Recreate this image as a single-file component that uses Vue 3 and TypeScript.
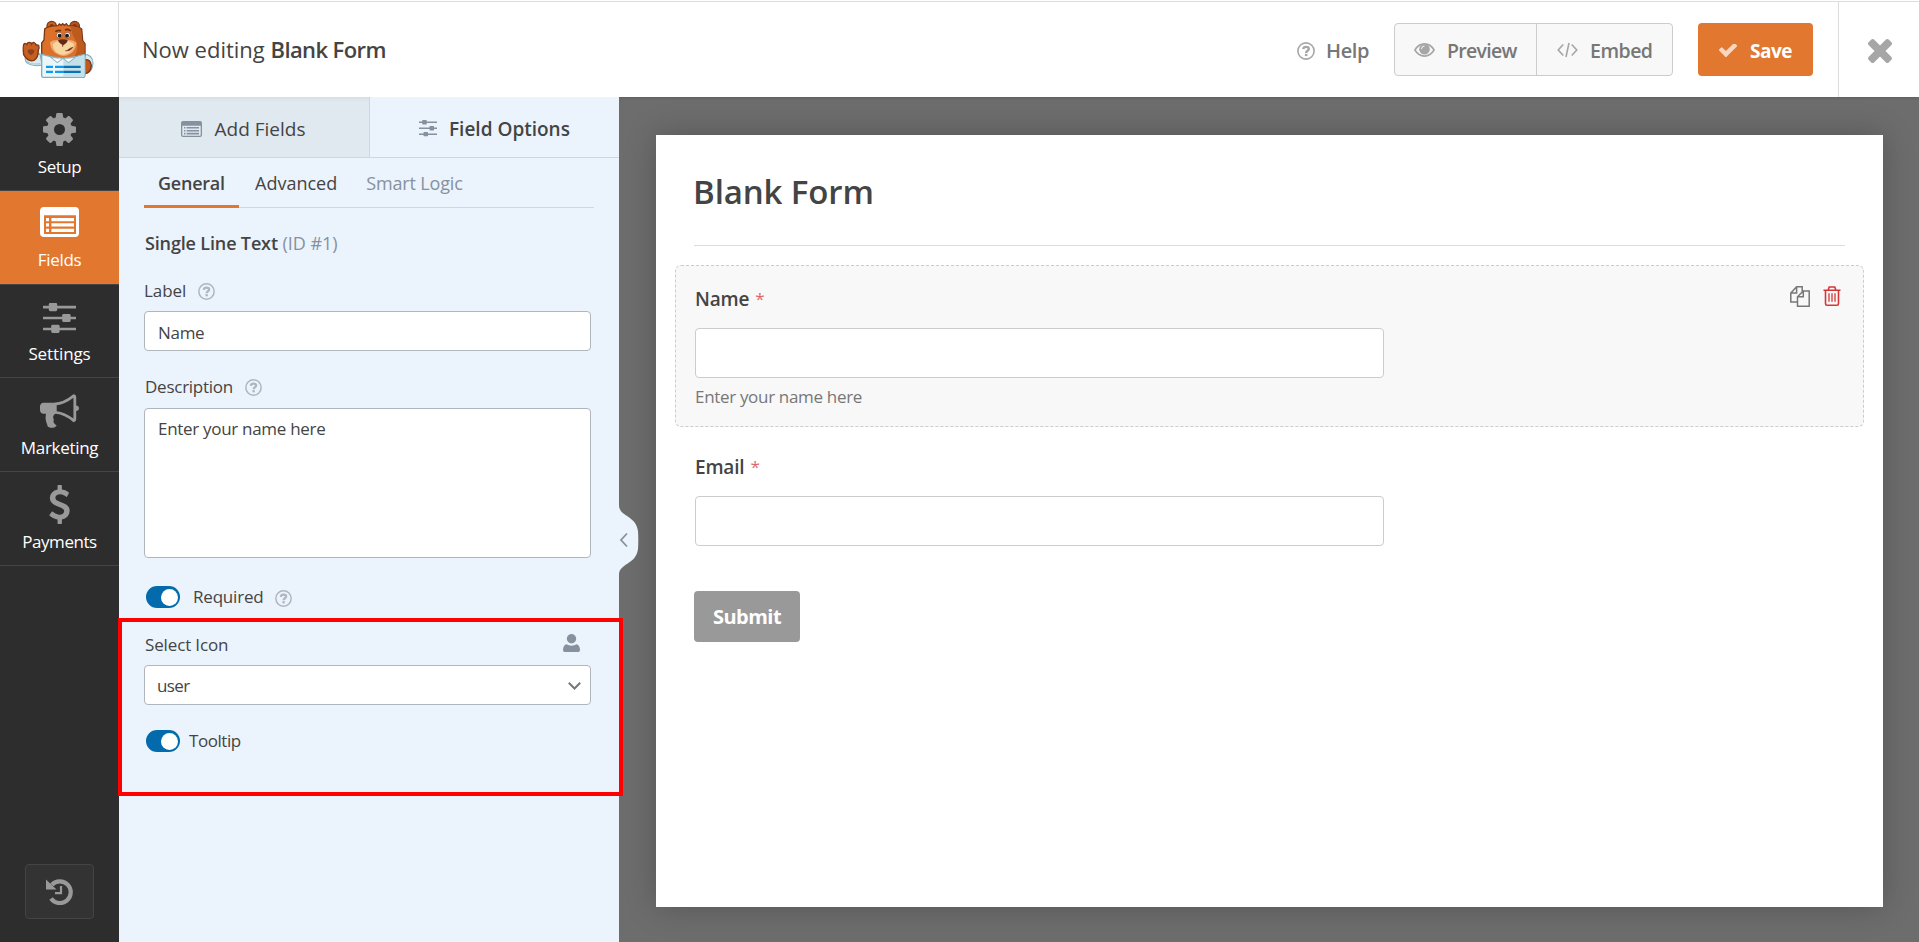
<script setup lang="ts">
import { ref } from 'vue'

interface NavItem {
  id: string
  label: string
  icon: string
  width: number
  height: number
}

const nav: NavItem[] = [
  { id: 'setup', label: 'Setup', icon: 'i-cog', width: 33, height: 33 },
  { id: 'fields', label: 'Fields', icon: 'i-list', width: 39, height: 30 },
  { id: 'settings', label: 'Settings', icon: 'i-sliders', width: 33, height: 30 },
  { id: 'marketing', label: 'Marketing', icon: 'i-bullhorn', width: 39, height: 34 },
  { id: 'payments', label: 'Payments', icon: 'i-dollar', width: 21, height: 39 },
]

const section = ref('fields')
const label = ref('Name')
const description = ref('Enter your name here')
const icon = ref('user')
const required = ref(true)
const tooltip = ref(true)
</script>

<template>
  <svg class="sprite" aria-hidden="true">
    <symbol id="i-cog" viewBox="128 128 1536 1536"><path fill="currentColor" d="M1152 896q0-106-75-181t-181-75-181 75-75 181 75 181 181 75 181-75 75-181zm512-109v222q0 12-8 23t-20 13l-185 28q-19 54-39 91 35 50 107 138 10 12 10 25t-9 23q-27 37-99 108t-94 71q-12 0-26-9l-138-108q-44 23-91 38-16 136-29 186-7 28-36 28h-222q-14 0-24.5-8.5t-11.5-21.5l-28-184q-49-16-90-37l-141 107q-10 9-25 9-14 0-25-11-126-114-165-168-7-10-7-23 0-12 8-23 15-21 51-66.5t54-70.5q-27-50-41-99l-183-27q-13-2-21-12.5t-8-23.5v-222q0-12 8-23t19-13l186-28q14-46 39-92-40-57-107-138-10-12-10-24 0-10 9-23 26-36 98.5-107.5t94.5-71.5q13 0 26 10l138 107q44-23 91-38 16-136 29-186 7-28 36-28h222q14 0 24.5 8.5t11.5 21.5l28 184q49 16 90 37l142-107q9-9 24-9 13 0 25 10 129 119 165 170 7 8 7 22 0 12-8 23-15 21-51 66.5t-54 70.5q26 50 41 98l183 28q13 2 21 12.5t8 23.5z" /></symbol>
    <symbol id="i-list" viewBox="0 0 39 30">
      <path fill="currentColor" fill-rule="evenodd" d="M4 0H35a4 4 0 0 1 4 4V26a4 4 0 0 1-4 4H4a4 4 0 0 1-4-4V4A4 4 0 0 1 4 0ZM4 8.3V27H36V8.3Z" />
      <path fill="currentColor" d="M6 11h3v3.2H6zM11.4 11H34v3.2H11.4zM6 16.3h3v3.2H6zM11.4 16.3H34v3.2H11.4zM6 21.8h3v3.2H6zM11.4 21.8H34v3.2H11.4z" />
    </symbol>
    <symbol id="i-sliders" viewBox="0 0 33 30">
      <path fill="currentColor" d="M0 2.8h33v2.6H0zM0 13.7h33v2.6H0zM0 24.7h33v2.6H0z" />
      <rect x="5.8" y="0" width="8.4" height="8.2" rx="1.4" fill="currentColor" />
      <rect x="19.2" y="10.9" width="8.4" height="8.2" rx="1.4" fill="currentColor" />
      <rect x="8.2" y="21.8" width="8.4" height="8.2" rx="1.4" fill="currentColor" />
    </symbol>
    <symbol id="i-bullhorn" viewBox="0 116 1792 1560"><path fill="currentColor" d="M1664 640q53 0 90.500 37.500t37.500 90.500-37.500 90.500-90.500 37.500v384q0 52-38 90t-90 38q-417-347-812-380-58 19-91 66t-31 100.500 40 92.500q-20 33-23 65.500t6 58 33.500 55 48 50 61.500 50.500q-29 58-111.500 83t-168.500 11.500-132-55.500q-7-23-29.500-87.500t-32-94.500-23-89-15-101 3.500-98.500 22-110.500h-122q-66 0-113-47t-47-113v-192q0-66 47-113t113-47h480q435 0 896-384 52 0 90 38t38 90v384zm-128 604v-954q-394 302-768 343v270q377 42 768 341z" /></symbol>
    <symbol id="i-dollar" viewBox="424 0 940 1792"><path fill="currentColor" d="M1362 1185q0 153-99.500 263.500t-258.500 136.500v175q0 14-9 23t-23 9h-135q-13 0-22.500-9.500t-9.500-22.500v-175q-66-9-127.500-31t-101.500-44.500-74-48-46.500-37.500-17.500-18q-17-21-2-41l103-135q7-10 23-12 15-2 24 9l2 2q113 99 243 125 37 8 74 8 81 0 142.500-43t61.500-122q0-28-15-53t-33.500-42-58.500-37.500-66-32-80-32.500q-39-16-61.500-25t-61.500-26.500-62.500-31-56.500-35.500-53.500-42.500-43.500-49-35.500-58-21-66.500-8.500-78q0-138 98-242t255-134v-180q0-13 9.500-22.500t22.500-9.500h135q14 0 23 9t9 23v176q57 6 110.500 23t87 33.500 63.500 37.500 39 29 15 14q17 18 5 38l-81 146q-8 15-23 16-14 3-27-7-3-3-14.500-12t-39-26.500-58.500-32-74.500-26-85.500-11.500q-95 0-155 43t-60 111q0 26 8.500 48t29.500 41.500 39.500 33 56 31 60.500 27 70 27.500q53 20 81 31.500t76 35 75.500 42.500 62 50 53 63.500 31.500 76.500 13 94z" /></symbol>
    <symbol id="i-help" viewBox="0 0 18 18">
      <circle cx="9" cy="9" r="8.1" fill="none" stroke="currentColor" stroke-width="1.6" />
      <path d="M6.200 7.200C6.400 5.400 7.500 4.900 9 4.900c1.700 0 2.800.8 2.800 2.100 0 1.800-2.700 1.700-2.700 3.900" fill="none" stroke="currentColor" stroke-width="2.400" />
      <rect x="7.900" y="11.800" width="2.500" height="2.300" fill="currentColor" />
    </symbol>
  </svg>

  <div class="builder">
    <header class="topbar">
      <div class="topbar-inner">
        <div class="logo">
          <svg viewBox="60 55 230 185" width="76.7" height="61.7">
            <path d="M112 198C90 198 72 190 76 172l44-10 6 34z" fill="#d9ebf0" stroke="#7eaaba" stroke-width="3" />
            <path d="M80 184q12 12 40 8" fill="none" stroke="#9cc3cf" stroke-width="3" />
            <path d="M71 165q-4-32 3-34 5 0 7 5 1-9 8-8 5 0 6 5 4-7 9-3 4 2 4 6 8-2 9 5 1 5-2 10 0 24-13 31-18 6-31-17z" fill="#c65f22" stroke="#7c3714" stroke-width="4" />
            <path d="M83 152q9-6 20 0 0 10-10 15-10-5-10-15z" fill="#8e421c" />
            <path d="M250 164q28 0 29 27-2 27-24 32z" fill="#d9ebf0" stroke="#7eaaba" stroke-width="3" />
            <path d="M254 180q18-2 20 18-2 22-20 24z" fill="#c2581d" stroke="#7c3714" stroke-width="4" />
            <circle cx="155" cy="79" r="14" fill="#c7611f" stroke="#7c3714" stroke-width="4" />
            <circle cx="224" cy="79" r="14" fill="#b8531c" stroke="#7c3714" stroke-width="4" />
            <circle cx="155" cy="79" r="6" fill="#7c3714" />
            <circle cx="224" cy="79" r="6" fill="#7c3714" />
            <path d="M134 88q8-9 40-10l4-5 5 4 5-5 5 5 6-5 4 6q34 1 42 10l3 35 7 9v36q-14 8-34 8h-62q-20 0-34-8v-38l7-9z" fill="#dd7029" stroke="#7c3714" stroke-width="4" />
            <path d="M212 80q24 1 31 9l3 34 7 9v33q-13 8-32 9 14-20 10-45-17-24-19-49z" fill="#bd5a1d" />
            <path d="M150 128q10-8 23-7h33q14-1 23 8-2 34-38 40-38-4-41-41z" fill="#f0a875" />
            <path d="M158 134q14-12 30-12 20 0 34 12-4 29-34 31-27-2-30-31z" fill="#f8d79f" />
            <circle cx="178" cy="107" r="9" fill="#fff" stroke="#7c3714" stroke-width="2" />
            <circle cx="202" cy="107" r="9" fill="#fff" stroke="#7c3714" stroke-width="2" />
            <circle cx="179" cy="108" r="6" fill="#151b24" />
            <circle cx="201" cy="108" r="6" fill="#151b24" />
            <path d="M166 96q8-6 17-3M195 91q9-5 17 3" fill="none" stroke="#6f3011" stroke-width="5" />
            <path d="M174 122q14-7 29 0 0 8-14 15-14-7-15-15z" fill="#612b18" />
            <path d="M188 135v6M196 153q14 3 22-11" fill="none" stroke="#81392a" stroke-width="3" />
            <path d="M202 150l13-8q-2 14-13 8z" fill="#81392a" />
            <path d="M125 164q16 3 32 8 33 7 66 0 16-5 32-8v64q0 5-5 5H130q-5 0-5-5z" fill="#ecf6f8" stroke="#7daebe" stroke-width="4" />
            <path d="M190 177q18 0 33-3 16-4 30-8v61q0 4-4 4h-59z" fill="#c4e1e9" />
            <path d="M150 171l22 18 17-13 17 13 22-18q-38 9-78 0z" fill="#fff" stroke="#8db5c1" stroke-width="3" />
            <path d="M138 198h21v7h-21zM138 213h21v7h-21zM165 198h25v7h-25zM165 213h25v7h-25z" fill="#0c9bee" />
            <path d="M190 198h52v7h-52zM190 213h52v7h-52z" fill="#0872b5" />
          </svg>
        </div>
        <h1 class="editing">Now editing <b>Blank Form</b></h1>
        <a class="help"><svg width="18" height="18"><use href="#i-help" /></svg><span>Help</span></a>
        <div class="group">
          <button class="preview">
            <svg viewBox="0 0 21 14" width="21" height="14">
              <path d="M.9 7Q4.500.900 10.500.900T20.100 7Q16.500 13.100 10.500 13.100T.9 7Z" fill="none" stroke="currentColor" stroke-width="1.600" />
              <circle cx="10.500" cy="6.200" r="5.300" fill="currentColor" />
              <path d="M7.500 6q0-3 3-3" fill="none" stroke="#f8f8f8" stroke-width="1" />
            </svg>
            <span>Preview</span>
          </button>
          <button class="embed">
            <svg viewBox="0 0 21 16" width="21" height="16"><path d="M6.300 2.500 1.200 8l5.100 5.500M14.700 2.500 19.800 8l-5.100 5.500M12 1 9 15" fill="none" stroke="currentColor" stroke-width="1.600" /></svg>
            <span>Embed</span>
          </button>
        </div>
        <button class="save">
          <svg viewBox="121 410 1550 1112" width="18" height="13"><path fill="currentColor" d="M1671 566q0 40-28 68l-724 724-136 136q-28 28-68 28t-68-28l-136-136-362-362q-28-28-28-68t28-68l136-136q28-28 68-28t68 28l294 295 656-657q28-28 68-28t68 28l136 136q28 28 28 68z" /></svg>
          <span>Save</span>
        </button>
        <button class="close">
          <svg viewBox="302 366 1188 1188" width="24" height="24"><path fill="currentColor" d="M1490 1322q0 40-28 68l-136 136q-28 28-68 28t-68-28l-294-294-294 294q-28 28-68 28t-68-28l-136-136q-28-28-28-68t28-68l294-294-294-294q-28-28-28-68t28-68l136-136q28-28 68-28t68 28l294 294 294-294q28-28 68-28t68 28l136 136q28 28 28 68t-28 68l-294 294 294 294q28 28 28 68z" /></svg>
        </button>
      </div>
    </header>

    <div class="body">
      <nav class="sidebar">
        <a v-for="n in nav" :key="n.id" :class="['nav', n.id, { active: section === n.id }]" @click="section = n.id">
          <span class="nav-icon"><svg :width="n.width" :height="n.height"><use :href="'#' + n.icon" /></svg></span>
          <span class="nav-label">{{ n.label }}</span>
        </a>
        <button class="revisions">
          <svg viewBox="0 0 27 27" width="27" height="27">
            <path d="M5.800 6.800A10.900 10.900 0 1 1 5 20.600" fill="none" stroke="currentColor" stroke-width="4.200" />
            <path d="M0 1.500v10h10.500z" fill="currentColor" />
            <path d="M15 8v7.200H9" fill="none" stroke="currentColor" stroke-width="2.200" />
          </svg>
        </button>
      </nav>

      <aside class="panel">
        <div class="tabs">
          <a class="tab add">
            <svg viewBox="0 0 21 16" width="21" height="16">
              <path fill="currentColor" fill-rule="evenodd" d="M2 0H19a2 2 0 0 1 2 2V14a2 2 0 0 1-2 2H2a2 2 0 0 1-2-2V2A2 2 0 0 1 2 0ZM1.300 4.700V14a.7.7 0 0 0 .7.700H19a.7.7 0 0 0 .7-.7V4.700Z" />
              <path fill="currentColor" d="M3 6h1.400v1.600H3zM5.600 6H18v1.600H5.600zM3 8.900h1.400v1.600H3zM5.600 8.900H18v1.600H5.600zM3 11.800h1.400v1.600H3zM5.600 11.800H18v1.600H5.600z" />
            </svg>
            <span>Add Fields</span>
          </a>
          <a class="tab options"><svg width="18" height="16.4"><use href="#i-sliders" /></svg><span>Field Options</span></a>
        </div>

        <div class="panel-body">
          <div class="subtabs">
            <a class="general">General</a>
            <a class="advanced">Advanced</a>
            <a class="logic">Smart Logic</a>
          </div>

          <h2 class="field-title">Single Line Text <span>(ID #1)</span></h2>

          <div class="row label-row"><label>Label</label><svg class="q" width="17" height="17"><use href="#i-help" /></svg></div>
          <input v-model="label" class="control text" type="text" />

          <div class="row desc-row"><label>Description</label><svg class="q" width="17" height="17"><use href="#i-help" /></svg></div>
          <textarea v-model="description" class="control area" spellcheck="false"></textarea>

          <div class="row req-row">
            <button :class="['toggle', { on: required }]" @click="required = !required"><i></i></button>
            <label>Required</label><svg class="q" width="17" height="17"><use href="#i-help" /></svg>
          </div>

          <div class="row icon-row">
            <label>Select Icon</label>
            <svg class="person" viewBox="0 0 17 18" width="17" height="18">
              <circle cx="8.500" cy="4.800" r="4.700" fill="currentColor" />
              <path fill="currentColor" d="M3.300 10.300Q8.500 13 13.700 10.300 17 11.600 17 16.200q0 1.800-1.800 1.800H1.800Q0 18 0 16.200 0 11.600 3.300 10.300Z" />
            </svg>
          </div>
          <div class="control select">
            <span>{{ icon }}</span>
            <svg viewBox="0 0 13 8" width="13" height="8"><path d="M.8.800 6.500 6.500 12.200.800" fill="none" stroke="#777" stroke-width="2" /></svg>
          </div>

          <div class="row tip-row">
            <button :class="['toggle', { on: tooltip }]" @click="tooltip = !tooltip"><i></i></button>
            <label>Tooltip</label>
          </div>
        </div>

        <svg class="handle" viewBox="0 0 21 70" width="21" height="70">
          <path d="M1 0C1 12 18 10 20 26Q20.600 35 20 44C18 60 1 58 1 70Z" fill="#ebf3fc" />
          <path d="M9 28.500 3 35l6 6.500" fill="none" stroke="#86919f" stroke-width="1.800" />
        </svg>
        <div class="highlight"></div>
      </aside>

      <main class="canvas">
        <section class="form">
          <h2 class="form-title">Blank Form</h2>
          <hr />
          <div class="field selected">
            <div class="field-head">
              <span class="field-label name">Name</span><sup>*</sup>
              <div class="actions">
                <svg class="copy" viewBox="0 0 20 21" width="20" height="21">
                  <path d="M7 16H.8V7L6.600.800h5.600V6.500M6.600.800V7H.8M13.300 5H19.200V20.200H7.500V10.700zM13.300 5v5.700H7.500" fill="none" stroke="#777" stroke-width="1.500" />
                </svg>
                <svg class="trash" viewBox="0 0 18 20" width="18" height="20">
                  <path d="M.5 4.200H17.500M5.200 4 6.200 1h5.600l1 3M2.500 4.500V17.500q0 1.700 1.400 1.700H14.100q1.400 0 1.400-1.700V4.500" fill="none" stroke="#d63638" stroke-width="1.600" />
                  <path d="M6 7.300v8.500M9 7.300v8.500M12 7.300v8.500" stroke="#d63638" stroke-width="1.300" />
                </svg>
              </div>
            </div>
            <div class="box"></div>
            <p class="hint">{{ description }}</p>
          </div>
          <div class="field">
            <div class="field-head"><span class="field-label email">Email</span><sup>*</sup></div>
            <div class="box"></div>
          </div>
          <button class="submit">Submit</button>
        </section>
      </main>
    </div>
  </div>
</template>

<style>
html,
body {
  margin: 0;
  overflow: hidden;
}
</style>

<style scoped>
* {
  box-sizing: border-box;
}
.sprite {
  display: none;
}
.builder {
  display: flex;
  flex-direction: column;
  width: 100vw;
  height: 100vh;
  font-family: "Open Sans", "Noto Sans", sans-serif;
  font-size: 17px;
  color: #444;
}
svg {
  display: block;
  flex: none;
}
button {
  font: inherit;
  padding: 0;
  border: 0;
  background: none;
}
h1,
h2,
p {
  margin: 0;
}

.topbar {
  flex: none;
  height: 97px;
  padding-top: 1px;
  background: #fff;
  position: relative;
  z-index: 1;
  box-shadow: 0 0 4px rgba(0, 0, 0, 0.22);
}
.topbar-inner {
  display: flex;
  align-items: center;
  height: 96px;
  border-top: 1px solid #ddd;
}
.logo {
  width: 119px;
  height: 95px;
  padding: 16px 0 0 20px;
  border-right: 1px solid #ddd;
}
.editing {
  margin: -1px auto 0 23px;
  font-size: 22px;
  font-weight: 400;
  letter-spacing: 0;
}
.editing b {
  font-weight: 600;
  letter-spacing: -0.6px;
}
.help {
  display: flex;
  align-items: center;
  width: 97px;
  padding-top: 1px;
  color: #777;
  font-size: 20px;
  font-weight: 600;
  letter-spacing: -0.38px;
}
.help svg {
  margin: 1px 11px 0 0;
  color: #a6a6a6;
}
.group {
  display: flex;
  width: 279px;
  height: 53px;
  background: #f8f8f8;
  border: 1px solid #ccc;
  border-radius: 4px;
}
.group button {
  display: flex;
  align-items: center;
  padding-top: 1px;
  color: #777;
  font-size: 19.5px;
  font-weight: 600;
}
.group svg {
  color: #a6a6a6;
}
.preview {
  width: 142px;
  padding-left: 19px;
  gap: 12px;
  border-right: 1px solid #ccc !important;
  letter-spacing: -0.7px;
}
.embed {
  padding-left: 20px;
  gap: 12px;
  letter-spacing: -0.5px;
}
.save {
  display: flex;
  align-items: center;
  gap: 13px;
  width: 115px;
  height: 53px;
  margin: 0 25px;
  padding: 2px 0 0 21px !important;
  border-radius: 4px;
  background: #e27730;
  color: #fff;
  font-size: 19px;
  font-weight: 700;
  letter-spacing: -0.5px;
}
.save svg {
  color: #f8d6bf;
}
.close {
  width: 81px;
  height: 95px;
  padding: 2px 0 0 29px !important;
  border-left: 1px solid #ddd !important;
  color: #a6a6a6;
}

.body {
  display: flex;
  flex: 1;
  min-height: 0;
}
.sidebar {
  display: flex;
  flex-direction: column;
  flex: none;
  width: 119px;
  background: #2d2d2d;
  position: relative;
  z-index: 2;
}
.nav {
  display: flex;
  flex-direction: column;
  align-items: center;
  height: 93.75px;
  border-bottom: 1px solid #444;
  color: #999;
}
.nav.active {
  background: #e27730;
  color: #fff;
}
.nav-icon {
  display: flex;
  align-items: center;
  height: 65px;
}
.nav.fields .nav-icon svg {
  margin-top: -2px;
}
.nav.settings .nav-icon svg {
  margin-top: 1px;
}
.nav-label {
  margin-top: -7px;
  color: #fff;
  font-size: 17px;
  line-height: 24px;
  letter-spacing: -0.3px;
}
.fields .nav-label {
  margin-top: -8px;
}
.setup .nav-label {
  letter-spacing: -0.5px;
}
.payments .nav-label {
  letter-spacing: -0.45px;
}
.settings .nav-label {
  margin-top: -8px;
  letter-spacing: -0.1px;
}
.revisions {
  display: flex;
  align-items: center;
  justify-content: center;
  width: 69px;
  height: 55px;
  margin: auto 0 23px 25px;
  border: 1px solid #444;
  border-radius: 4px;
  background: #333;
  color: #999;
}

.panel {
  flex: none;
  width: 500px;
  background: #ebf3fc;
  position: relative;
  z-index: 2;
}
.tabs {
  display: flex;
  height: 61px;
  border-bottom: 1px solid #ced7e0;
}
.tab {
  display: flex;
  align-items: center;
  font-size: 19px;
}
.tab svg {
  color: #86919f;
}
.add {
  width: 251px;
  padding: 3px 0 0 62px;
  gap: 12.5px;
  background: linear-gradient(#d6dfe9 0, #e0e8f0 5px);
  border-right: 1px solid #ced7e0;
}
.options {
  padding: 3px 0 0 49px;
  gap: 12px;
  font-weight: 600;
}
.panel-body {
  padding: 0 25px;
}
.subtabs {
  display: flex;
  height: 50px;
  border-bottom: 1px solid #ced7e0;
  font-size: 18px;
  line-height: 50px;
}
.subtabs a {
  height: 50px;
}
.general {
  width: 95px;
  padding-left: 14px;
  border-bottom: 3px solid #e27730;
  font-weight: 600;
  letter-spacing: -0.24px;
}
.advanced {
  margin-left: 16px;
}
.logic {
  margin-left: 29px;
  color: #86919f;
  letter-spacing: -0.15px;
}
.field-title {
  margin: 20px 0 0 1px;
  font-size: 18px;
  font-weight: 600;
  line-height: 30px;
  letter-spacing: -0.15px;
}
.field-title span {
  font-weight: 400;
  color: #86919f;
  letter-spacing: 0;
}
.row {
  display: flex;
  align-items: center;
  height: 26px;
  line-height: 26px;
  letter-spacing: -0.2px;
}
.q {
  margin-left: 12px;
  color: #b0b6bd;
}
.label-row {
  margin: 20px 0 7px;
  letter-spacing: -0.07px;
}
.desc-row {
  margin: 23px 0 8px;
}
.desc-row label {
  margin-left: 1px;
  letter-spacing: -0.25px;
}
.req-row {
  margin: 26px 0 22px 2px;
}
.req-row label {
  margin-left: 13px;
}
.req-row .q {
  margin-top: 2px;
}
.icon-row {
  padding-left: 1px;
  margin-bottom: 7px;
  letter-spacing: -0.14px;
}
.person {
  margin: -4px 0 0 335px;
  color: #86919f;
}
.tip-row {
  margin: 23px 0 0 2px;
  letter-spacing: -0.45px;
}
.tip-row label {
  margin-left: 9px;
}
.control {
  display: block;
  width: 447px;
  border: 1px solid #b0b6bd;
  border-radius: 4px;
  background: #fff;
  font: inherit;
  color: #444;
  outline: none;
  letter-spacing: -0.3px;
}
.text {
  height: 40px;
  padding: 2px 12px 0 13px;
}
.area {
  height: 150px;
  padding: 7px 12px 7px 13px;
  line-height: 26px;
  resize: none;
}
.select {
  display: flex;
  align-items: center;
  justify-content: space-between;
  height: 40px;
  padding: 1px 9px 0 12px;
  letter-spacing: -0.6px;
}
.toggle {
  width: 34px;
  height: 22px;
  border-radius: 11px;
  background: #86919f;
}
.toggle i {
  display: block;
  width: 17px;
  height: 17px;
  margin-left: 2px;
  border-radius: 50%;
  background: #fff;
}
.toggle.on {
  background: #036aab;
}
.toggle.on i {
  margin-left: 15px;
}
.handle {
  position: absolute;
  left: 498.5px;
  top: 408px;
}
.highlight {
  position: absolute;
  left: -1px;
  top: 521px;
  width: 505px;
  height: 178px;
  border: 4px solid #fe0000;
}

.canvas {
  flex: 1;
  padding: 38px 36px 35px 37px;
  background: #6d6d6d;
}
.form {
  width: 1227px;
  height: 772px;
  padding: 38px 19px 0;
  background: #fff;
  box-shadow: 0 0 30px rgba(0, 0, 0, 0.22);
}
.form-title {
  margin-left: 18px;
  font-size: 33px;
  font-weight: 600;
  line-height: 37px;
  letter-spacing: -0.12px;
}
hr {
  height: 1px;
  margin: 35px 19px 19px;
  border: 0;
  background: #ddd;
}
.field {
  height: 162px;
  padding: 20px 19px;
  border: 1px dashed transparent;
  border-radius: 6px;
}
.selected {
  background: #f8f8f8;
  border-color: #ccc;
}
.field + .field {
  height: 146px;
  margin-top: 6px;
}
.field-head {
  display: flex;
  height: 26px;
  line-height: 26px;
}
.field-label {
  font-size: 19px;
  font-weight: 600;
  letter-spacing: -0.18px;
}
sup {
  margin-left: 6px;
  color: #d63638;
  font-size: 17px;
  line-height: 26px;
  vertical-align: baseline;
  opacity: 0.75;
}
.actions {
  display: flex;
  gap: 13px;
  margin-left: auto;
  padding-right: 3px;
}
.box {
  width: 689px;
  height: 50px;
  margin-top: 16px;
  border: 1px solid #ccc;
  border-radius: 4px;
  background: #fff;
}
.hint {
  margin-top: 6px;
  color: #777;
  font-size: 17px;
  line-height: 26px;
  letter-spacing: -0.32px;
}
.submit {
  display: block;
  width: 106px;
  height: 51px;
  margin: 12px 0 0 19px;
  border-radius: 4px;
  background: #999;
  color: #fff;
  font-size: 20px;
  font-weight: 700;
  letter-spacing: -0.5px;
}
</style>
